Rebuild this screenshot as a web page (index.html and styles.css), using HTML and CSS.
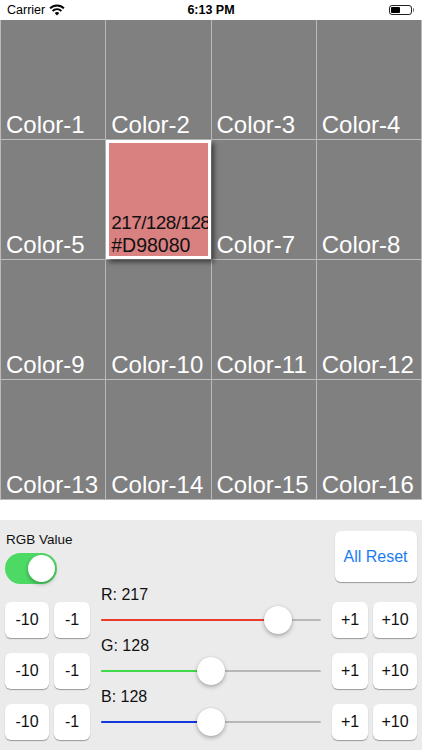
FILE: index.html
```html
<!DOCTYPE html>
<html>
<head>
<meta charset="utf-8">
<link rel="stylesheet" href="styles.css">
</head>
<body>
<div class="status">
  <div class="sb-left">
    <span class="carrier">Carrier</span>
    <svg class="wifi" viewBox="0 0 16 12" width="16" height="12">
      <path d="M1.1 4.4 A9.6 9.6 0 0 1 14.9 4.4" fill="none" stroke="#000" stroke-width="1.9"/>
      <path d="M3.6 7 A6.1 6.1 0 0 1 12.4 7" fill="none" stroke="#000" stroke-width="1.9"/>
      <path d="M8 11.4 L5.7 9.1 A3.2 3.2 0 0 1 10.3 9.1 Z" fill="#000"/>
    </svg>
  </div>
  <div class="time">6:13 PM</div>
  <div class="sb-right">
    <div class="battery"><div class="level"></div></div>
    <div class="nub"></div>
  </div>
</div>

<div class="grid">
  <div class="cell"><span class="name">Color-1</span></div>
  <div class="cell"><span class="name">Color-2</span></div>
  <div class="cell"><span class="name">Color-3</span></div>
  <div class="cell"><span class="name">Color-4</span></div>
  <div class="cell"><span class="name">Color-5</span></div>
  <div class="cell selected"><span class="sel-line tight">217/128/128</span><span class="sel-line">#D98080</span></div>
  <div class="cell"><span class="name">Color-7</span></div>
  <div class="cell"><span class="name">Color-8</span></div>
  <div class="cell"><span class="name">Color-9</span></div>
  <div class="cell"><span class="name">Color-10</span></div>
  <div class="cell"><span class="name">Color-11</span></div>
  <div class="cell"><span class="name">Color-12</span></div>
  <div class="cell"><span class="name">Color-13</span></div>
  <div class="cell"><span class="name">Color-14</span></div>
  <div class="cell"><span class="name">Color-15</span></div>
  <div class="cell"><span class="name">Color-16</span></div>
</div>

<div class="spacer"></div>

<div class="panel">
  <div class="panel-head">
    <div class="rgb-col">
      <div class="rgb-label">RGB Value</div>
      <div class="toggle"><div class="knob"></div></div>
    </div>
    <button class="btn reset">All Reset</button>
  </div>

  <div class="slider-row">
    <button class="btn wide">-10</button>
    <button class="btn narrow">-1</button>
    <div class="slider">
      <div class="slider-label">R: 217</div>
      <div class="track-box">
        <div class="track"><div class="fill red" style="width:177px"></div></div>
        <div class="thumb" style="left:163px"></div>
      </div>
    </div>
    <button class="btn narrow">+1</button>
    <button class="btn wide">+10</button>
  </div>

  <div class="slider-row">
    <button class="btn wide">-10</button>
    <button class="btn narrow">-1</button>
    <div class="slider">
      <div class="slider-label">G: 128</div>
      <div class="track-box">
        <div class="track"><div class="fill green" style="width:110px"></div></div>
        <div class="thumb" style="left:96px"></div>
      </div>
    </div>
    <button class="btn narrow">+1</button>
    <button class="btn wide">+10</button>
  </div>

  <div class="slider-row">
    <button class="btn wide">-10</button>
    <button class="btn narrow">-1</button>
    <div class="slider">
      <div class="slider-label">B: 128</div>
      <div class="track-box">
        <div class="track"><div class="fill blue" style="width:110px"></div></div>
        <div class="thumb" style="left:96px"></div>
      </div>
    </div>
    <button class="btn narrow">+1</button>
    <button class="btn wide">+10</button>
  </div>
</div>
</body>
</html>
```

FILE: styles.css
```css
* { box-sizing: border-box; }

html, body {
  margin: 0;
  padding: 0;
  background: #ffffff;
  font-family: "Liberation Sans", Arial, sans-serif;
  width: 422px;
  height: 750px;
  overflow: hidden;
}

/* status bar */
.status {
  height: 20px;
  display: grid;
  grid-template-columns: 1fr auto 1fr;
  align-items: center;
  padding: 0 6px;
  color: #000;
}
.sb-left {
  display: flex;
  align-items: center;
  gap: 4px;
}
.carrier {
  font-size: 12.5px;
  line-height: 20px;
  padding-left: 1px;
}
.wifi {
  display: block;
  margin-top: -1px;
}
.time {
  font-size: 12.5px;
  font-weight: bold;
  line-height: 20px;
}
.sb-right {
  display: flex;
  justify-content: flex-end;
  align-items: center;
  padding-right: 2px;
}
.battery {
  width: 23px;
  height: 10px;
  border: 1px solid #222;
  border-radius: 3px;
  padding: 1px;
}
.level {
  width: 9px;
  height: 100%;
  background: #000;
  border-radius: 1px;
}
.nub {
  width: 1.5px;
  height: 4px;
  background: #777;
  border-radius: 0 1px 1px 0;
  margin-left: 1px;
}

/* color grid */
.grid {
  display: grid;
  grid-template-columns: repeat(4, 1fr);
  grid-template-rows: repeat(4, 119px);
  gap: 1px;
  padding: 0 1px;
  background: #bababa;
  height: 480px;
}
.cell {
  background: #808080;
  display: flex;
  flex-direction: column;
  justify-content: flex-end;
  padding-left: 5px;
  overflow: hidden;
  min-width: 0;
}
.name {
  color: #ffffff;
  font-size: 24px;
  white-space: nowrap;
}
.cell.selected {
  position: relative;
  z-index: 1;
  background: #d98080;
  border: 3px solid #ffffff;
  padding-left: 2px;
  box-shadow: 3px 3px 5px rgba(0, 0, 0, 0.55);
}
.sel-line {
  color: #111;
  font-size: 19.5px;
  line-height: 22px;
  white-space: nowrap;
}
.sel-line.tight {
  font-size: 19px;
  letter-spacing: -0.6px;
}

.spacer {
  height: 20px;
  background: #ffffff;
}

/* control panel */
.panel {
  height: 230px;
  background: #ebebeb;
  padding: 0 5px;
}
.panel-head {
  display: flex;
  justify-content: space-between;
  align-items: flex-start;
  padding-top: 11px;
  margin-bottom: 3px;
}
.rgb-col {
  display: flex;
  flex-direction: column;
}
.rgb-label {
  font-size: 13.5px;
  line-height: 17px;
  color: #111;
  padding-left: 1px;
}
.toggle {
  margin-top: 5px;
  width: 52px;
  height: 31px;
  border-radius: 16px;
  background: #4cd964;
  position: relative;
}
.knob {
  position: absolute;
  top: 2px;
  right: 2px;
  width: 27px;
  height: 27px;
  border-radius: 50%;
  background: #fff;
  box-shadow: 0 2px 4px rgba(0, 0, 0, 0.3);
}

.btn {
  border: none;
  background: #ffffff;
  border-radius: 6px;
  box-shadow: 0 1px 1px rgba(0, 0, 0, 0.35);
  font-family: "Liberation Sans", Arial, sans-serif;
  font-size: 16px;
  color: #111;
  padding: 0;
  height: 36px;
}
.btn.reset {
  width: 82px;
  height: 51px;
  color: #1a7cf2;
  margin-right: 0.5px;
}
.btn.wide { width: 44px; flex: none; }
.btn.narrow { width: 36px; flex: none; }

.slider-row {
  display: flex;
  align-items: flex-end;
  height: 51px;
}
.slider-row .btn.wide:first-child { margin-right: 5px; }
.slider-row .btn.narrow + .slider { margin-left: 11px; }
.slider-row .slider + .btn.narrow { margin-left: 11px; margin-right: 5px; }

.slider {
  flex: 1;
  display: flex;
  flex-direction: column;
}
.slider-label {
  font-size: 16px;
  line-height: 15px;
  color: #111;
}
.track-box {
  position: relative;
  height: 36px;
  display: flex;
  align-items: center;
}
.track {
  width: 100%;
  height: 2px;
  background: #b8b8b8;
  border-radius: 1px;
}
.fill {
  height: 100%;
  border-radius: 1px;
}
.fill.red { background: #eb3b2a; }
.fill.green { background: #3fd94b; }
.fill.blue { background: #1437dc; }
.thumb {
  position: absolute;
  top: 4px;
  width: 28px;
  height: 28px;
  border-radius: 50%;
  background: #ffffff;
  box-shadow: 0 2px 4px rgba(0, 0, 0, 0.28), 0 0 1px rgba(0, 0, 0, 0.2);
}
```
